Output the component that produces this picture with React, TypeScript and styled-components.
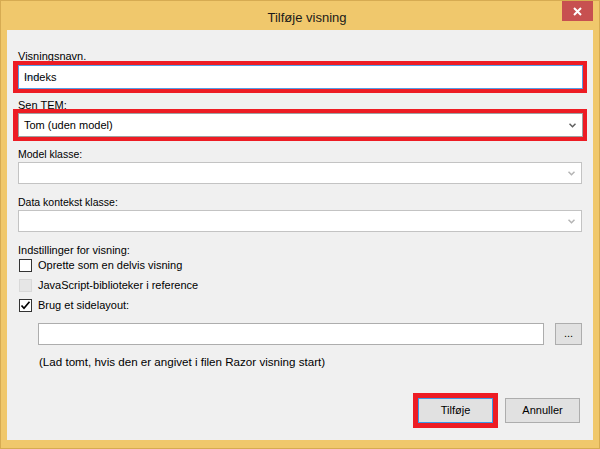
import React from "react";
import styled, { createGlobalStyle } from "styled-components";

const GlobalStyle = createGlobalStyle`
  html, body { margin: 0; padding: 0; }
  body {
    width: 600px;
    height: 449px;
    overflow: hidden;
    font-family: "Liberation Sans", Arial, sans-serif;
    color: #000;
  }
`;

const Window = styled.div`
  width: 600px;
  height: 449px;
  box-sizing: border-box;
  border: 1px solid #d6ab52;
  background: #f0c86c;
  display: flex;
  flex-direction: column;
`;

const TitleBar = styled.div`
  height: 29px;
  flex: none;
  display: flex;
  align-items: flex-start;
  padding-right: 6px;
`;

const Title = styled.div`
  flex: 1;
  text-align: center;
  padding-left: 51px;
  margin-top: 9px;
  font-size: 13px;
  line-height: 16px;
  color: #1a1a1a;
`;

const CloseButton = styled.div`
  width: 31px;
  height: 20px;
  background: #c75050;
  display: flex;
  align-items: center;
  justify-content: center;
`;

const Client = styled.div`
  flex: 1;
  margin: 0 6px 8px 6px;
  background: #f0f0f0;
  padding: 21px 0 0 11px;
  display: flex;
  flex-direction: column;
  align-items: flex-start;
  font-size: 11px;
`;

const Label = styled.div<{ $mt: number; $small?: boolean }>`
  margin-top: ${(p) => p.$mt}px;
  font-size: ${(p) => (p.$small ? "10.5px" : "11px")};
  line-height: 11px;
  white-space: nowrap;
`;

const Highlight = styled.div<{ $mt: number }>`
  margin-top: ${(p) => p.$mt}px;
  margin-left: -5px;
  border-style: solid;
  border-color: #ed1c24;
  border-width: 4px 4px 4px 5px;
`;

const TextBox = styled.div<{ $border: string; $w: number; $h: number }>`
  box-sizing: border-box;
  width: ${(p) => p.$w}px;
  height: ${(p) => p.$h}px;
  border: 1px solid ${(p) => p.$border};
  background: #fff;
  padding-left: 5px;
  font-size: 11px;
  line-height: ${(p) => p.$h - 2}px;
  white-space: nowrap;
`;

const Combo = styled(TextBox)<{ $mt?: number }>`
  margin-top: ${(p) => p.$mt ?? 0}px;
  display: flex;
  align-items: center;
  justify-content: space-between;
  padding-right: 6px;
`;

const Selected = styled.span`
  background: linear-gradient(transparent 0 4px, #d6e8fb 4px 8px, transparent 8px);
`;

const CheckRow = styled.div<{ $mt: number }>`
  margin-top: ${(p) => p.$mt}px;
  margin-left: 1px;
  height: 13px;
  display: flex;
  align-items: center;
  gap: 6px;
  line-height: 13px;
  white-space: nowrap;
`;

const Box = styled.div<{ $disabled?: boolean }>`
  box-sizing: border-box;
  width: 13px;
  height: 13px;
  border: 1px solid ${(p) => (p.$disabled ? "#d9d9d9" : "#333")};
  background: ${(p) => (p.$disabled ? "#e6e6e6" : "#fff")};
  display: flex;
  align-items: center;
  justify-content: center;
`;

const PathRow = styled.div`
  margin-top: 11px;
  margin-left: 20px;
  display: flex;
  gap: 11px;
`;

const PathInput = styled.div`
  box-sizing: border-box;
  width: 506px;
  height: 22px;
  border: 1px solid #adadad;
  background: #fff;
`;

const BrowseButton = styled.div`
  box-sizing: border-box;
  width: 27px;
  height: 22px;
  border: 1px solid #adadad;
  background: #e1e1e1;
  text-align: center;
  line-height: 18px;
`;

const Hint = styled.div`
  margin-top: 11px;
  margin-left: 21px;
  font-size: 11.6px;
  line-height: 11px;
  white-space: nowrap;
`;

const ButtonRow = styled.div`
  align-self: stretch;
  margin-top: 26px;
  padding-right: 13px;
  display: flex;
  justify-content: flex-end;
  align-items: center;
  gap: 7px;
`;

const FocusRing = styled.div`
  border: 5px solid #ed1c24;
  display: flex;
`;

const Button = styled.div<{ $primary?: boolean }>`
  box-sizing: border-box;
  width: 75px;
  height: 25px;
  border: 1px solid ${(p) => (p.$primary ? "#3c98e6" : "#adadad")};
  background: #e1e1e1;
  text-align: center;
  line-height: 23px;
  font-size: 11px;
`;

const Chevron = ({ color }: { color: string }) => (
  <svg width="7" height="5" viewBox="0 0 7 5">
    <polyline points="0.5,0.8 3.5,3.8 6.5,0.8" fill="none" stroke={color} strokeWidth="1.5" />
  </svg>
);

const Check = () => (
  <svg width="11" height="11" viewBox="0 0 11 11">
    <polyline points="1.5,5.5 4,8.3 9.5,1.8" fill="none" stroke="#000" strokeWidth="1.7" />
  </svg>
);

export default function App() {
  return (
    <>
      <GlobalStyle />
      <Window>
        <TitleBar>
          <Title>Tilføje visning</Title>
          <CloseButton>
            <svg width="9" height="9" viewBox="0 0 9 9">
              <path d="M1 1 L8 8 M8 1 L1 8" stroke="#fff" strokeWidth="2" />
            </svg>
          </CloseButton>
        </TitleBar>
        <Client>
          <Label $mt={0}>Visningsnavn.</Label>
          <Highlight $mt={-1}>
            <TextBox $border="#569de5" $w={565} $h={24}>
              <Selected>Ind</Selected>eks
            </TextBox>
          </Highlight>
          <Label $mt={7}>Sen TEM:</Label>
          <Highlight $mt={-2}>
            <Combo $border="#a0a0a0" $w={565} $h={24}>
              <span>Tom (uden model)</span>
              <Chevron color="#606060" />
            </Combo>
          </Highlight>
          <Label $mt={8} $small>Model klasse:</Label>
          <Combo $mt={2} $border="#c3c3c3" $w={564} $h={22}>
            <span />
            <Chevron color="#b4b4b4" />
          </Combo>
          <Label $mt={13} $small>Data kontekst klasse:</Label>
          <Combo $mt={2} $border="#c3c3c3" $w={564} $h={22}>
            <span />
            <Chevron color="#b4b4b4" />
          </Combo>
          <Label $mt={13}>Indstillinger for visning:</Label>
          <CheckRow $mt={3}>
            <Box />
            Oprette som en delvis visning
          </CheckRow>
          <CheckRow $mt={7}>
            <Box $disabled />
            JavaScript-biblioteker i reference
          </CheckRow>
          <CheckRow $mt={7}>
            <Box>
              <Check />
            </Box>
            Brug et sidelayout:
          </CheckRow>
          <PathRow>
            <PathInput />
            <BrowseButton>...</BrowseButton>
          </PathRow>
          <Hint>(Lad tomt, hvis den er angivet i filen Razor visning start)</Hint>
          <ButtonRow>
            <FocusRing>
              <Button $primary>Tilføje</Button>
            </FocusRing>
            <Button>Annuller</Button>
          </ButtonRow>
        </Client>
      </Window>
    </>
  );
}
